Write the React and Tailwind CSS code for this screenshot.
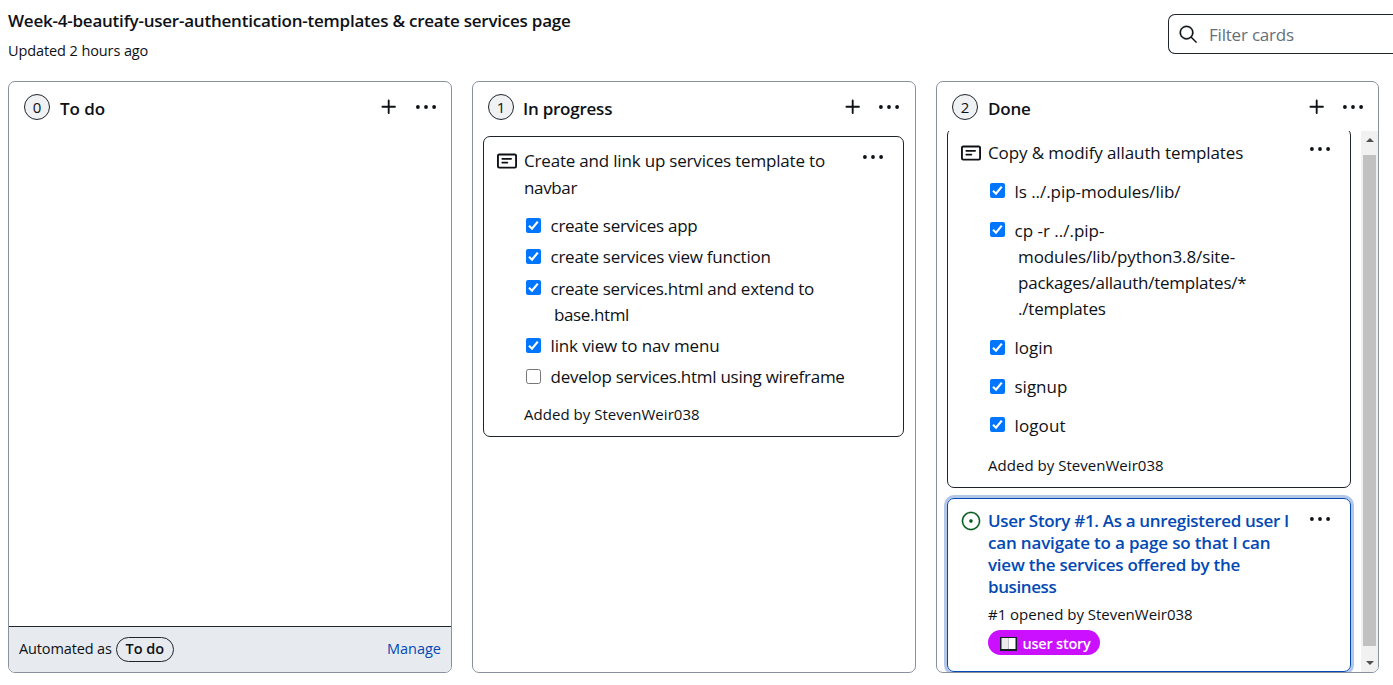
import { GoSearch, GoIssueOpened } from "react-icons/go";

function T({ c = "", children }) {
  return <span className={"inline-block whitespace-nowrap " + c}>{children}</span>;
}

function Plus() {
  return (
    <svg width="20" height="20" viewBox="0 0 16 16" fill="currentColor">
      <path d="M7.75 2a.75.75 0 0 1 .75.75V7h4.25a.75.75 0 0 1 0 1.5H8.5v4.25a.75.75 0 0 1-1.5 0V8.5H2.75a.75.75 0 0 1 0-1.5H7V2.75A.75.75 0 0 1 7.75 2Z" />
    </svg>
  );
}

function Dots() {
  return (
    <svg className="block" width="22" height="6" viewBox="0 0 22 6" fill="currentColor">
      <circle cx="1.9" cy="3" r="1.9" />
      <circle cx="10" cy="3" r="1.9" />
      <circle cx="18.1" cy="3" r="1.9" />
    </svg>
  );
}

function NoteIcon() {
  return (
    <svg className="block shrink-0" width="20" height="20" viewBox="0 0 16 16" fill="currentColor">
      <path d="M0 3.75C0 2.784.784 2 1.75 2h12.5c.966 0 1.75.784 1.75 1.75v8.5A1.75 1.75 0 0 1 14.25 14H1.75A1.75 1.75 0 0 1 0 12.25Zm1.75-.25a.25.25 0 0 0-.25.25v8.5c0 .138.112.25.25.25h12.5a.25.25 0 0 0 .25-.25v-8.5a.25.25 0 0 0-.25-.25ZM3.5 6.25a.75.75 0 0 1 .75-.75h7a.75.75 0 0 1 0 1.5h-7a.75.75 0 0 1-.75-.75Zm.75 2.25h4a.75.75 0 0 1 0 1.5h-4a.75.75 0 0 1 0-1.5Z" />
    </svg>
  );
}

function Check({ on = true }) {
  return on ? (
    <svg className="block shrink-0" width="15" height="15" viewBox="0 0 15 15">
      <rect width="15" height="15" rx="2" fill="#0075ff" />
      <path d="M3 7.8 6 10.7 11.8 3.6" fill="none" stroke="#fff" strokeWidth="2.2" />
    </svg>
  ) : (
    <span className="block size-[15px] shrink-0 rounded-[2.5px] border border-[#767676] bg-white" />
  );
}

function Item({ on = true, lines }) {
  return (
    <li className="flex">
      <span className="pt-[5px]"><Check on={on} /></span>
      <span className="ml-[9.5px] flex flex-col pt-[0.5px] -mb-[0.5px]">
        {lines.map(([t, c], i) => (
          <span key={t} className={i ? "h-[26.25px] pl-[3.5px]" : "h-[26.25px]"}><T c={c}>{t}</T></span>
        ))}
      </span>
    </li>
  );
}

function ColumnHead({ count, title, pad = "pr-[13px]", gap = "ml-4", inset = "ml-[10px]" }) {
  return (
    <header className={"flex h-[50px] shrink-0 items-center pl-[15px] " + pad}>
      <span className="flex size-[26px] items-center justify-center rounded-full border border-[#20252c] bg-[#eff1f3] pt-px text-[15px]">{count}</span>
      <h3 className={"grow pt-[3px] text-[17px] font-semibold leading-[26px] " + inset}>{title}</h3>
      <Plus />
      <span className={gap}><Dots /></span>
    </header>
  );
}

export default function App() {
  return (
    <div className="h-[685px] w-[1393px] overflow-hidden bg-white font-['Open_Sans',sans-serif] text-[17px] leading-[26.25px] text-[#0e1116]">
      <div className="flex h-[81px] justify-between">
        <div className="pl-2 pt-2">
          <h2 className="font-semibold"><T c="tracking-[-0.225px]">Week-4-beautify-user-authentication-templates &amp; create services page</T></h2>
          <p className="mt-1 text-[14.5px]"><T c="tracking-[-0.1px]">Updated 2 hours ago</T></p>
        </div>
        <div className="mt-[14px] flex h-10 w-[225px] items-center rounded-l-[7px] border border-r-0 border-[#20252c] pl-[9px]">
          <GoSearch size={20} strokeWidth=".4" />
          <span className="ml-[11px] pt-[3px] text-[#66707b]"><T c="tracking-[-0.2px]">Filter cards</T></span>
        </div>
      </div>
      <main className="flex gap-5 pl-2">
        <section className="flex h-[592px] w-[444px] flex-col overflow-hidden rounded-[7px] border border-[#88929d]">
          <ColumnHead count="0" gap="ml-[17px]" title={<T c="tracking-[-0.07px]">To do</T>} />
          <div className="grow" />
          <footer className="flex h-[46px] items-center border-t border-[#20252c] bg-[#e7ebef] px-[10px] text-[14.5px]">
            <T c="tracking-[-0.13px]">Automated as</T>
            <span className="ml-1 flex h-[25px] w-[58px] items-center justify-center rounded-full border border-[#20252c] font-semibold"><T>To do</T></span>
            <span className="ml-auto text-[#0349b4]"><T>Manage</T></span>
          </footer>
        </section>
        <section className="h-[592px] w-[444px] rounded-[7px] border border-[#88929d]">
          <ColumnHead count="1" pad="pr-[14px]" inset="ml-[9px]" title={<T c="tracking-[-0.24px]">In progress</T>} />
          <article className="ml-[10px] mt-1 flex h-[301px] w-[421px] rounded-[7px] border border-[#20252c] pl-[13px] pr-[18px]">
            <span className="pt-[14px]"><NoteIcon /></span>
            <div className="ml-[7px] grow pt-[11px]">
              <p><T c="tracking-[-0.19px]">Create and link up services template to</T></p>
              <p className="pt-[0.5px]"><T c="tracking-[-0.36px]">navbar</T></p>
              <ul className="mt-[11.5px] flex flex-col gap-[5px] pl-[2px]">
                <Item lines={[["create services app", "tracking-[-0.26px]"]]} />
                <Item lines={[["create services view function", "tracking-[-0.25px]"]]} />
                <Item lines={[["create services.html and extend to", "tracking-[-0.28px]"], ["base.html", "tracking-[-0.39px]"]]} />
                <Item lines={[["link view to nav menu", "tracking-[-0.14px]"]]} />
                <Item on={false} lines={[["develop services.html using wireframe", "tracking-[-0.27px]"]]} />
              </ul>
              <p className="mt-[11px] text-[15px]"><T c="tracking-[0.03px]">Added by StevenWeir038</T></p>
            </div>
            <span className="pt-[16.5px]"><Dots /></span>
          </article>
        </section>
        <section className="flex h-[592px] w-[443px] flex-col overflow-hidden rounded-[7px] border border-[#88929d]">
          <ColumnHead count="2" title={<T c="tracking-[-0.2px]">Done</T>} />
          <div className="-mt-px flex min-h-0 grow justify-between">
            <div className="flex h-[542px] w-[420px] flex-col overflow-hidden pl-[10px]">
              <article className="-mt-[3px] flex h-[360px] w-[404px] shrink-0 rounded-[7px] border border-[#20252c] pl-[13px] pr-[18px]">
                <span className="pt-[14px]"><NoteIcon /></span>
                <div className="ml-[7px] grow pt-[11px]">
                  <p><T c="tracking-[-0.1px]">Copy &amp; modify allauth templates</T></p>
                  <ul className="mt-[12px] flex flex-col gap-[12.6px] pl-[2px]">
                    <Item lines={[["ls ../.pip-modules/lib/", "tracking-[-0.05px]"]]} />
                    <Item lines={[["cp -r ../.pip-"], ["modules/lib/python3.8/site-", "tracking-[-0.1px]"], ["packages/allauth/templates/*", "tracking-[-0.23px]"], ["./templates", "tracking-[-0.2px]"]]} />
                    <Item lines={[["login"]]} />
                    <Item lines={[["signup"]]} />
                    <Item lines={[["logout", "tracking-[0.1px]"]]} />
                  </ul>
                  <p className="mt-[13.5px] text-[15px]"><T c="tracking-[0.03px]">Added by StevenWeir038</T></p>
                </div>
                <span className="pt-[16.5px]"><Dots /></span>
              </article>
              <article className="mt-[10px] flex h-[174px] w-[404px] shrink-0 rounded-[7px] border border-[#0349b4] pl-[13px] pr-[18px] ring-3 ring-[#0349b4]/30">
                <span className="pt-[12px] text-[#055d20]"><GoIssueOpened size={20} strokeWidth=".3" /></span>
                <div className="ml-[7px] grow pt-[11px]">
                  <p className="flex flex-col font-semibold leading-[22px] text-[#0349b4]">
                    <T c="tracking-[-0.32px]">User Story #1. As a unregistered user I</T>
                    <T c="tracking-[-0.17px]">can navigate to a page so that I can</T>
                    <T c="tracking-[-0.24px]">view the services offered by the</T>
                    <T c="tracking-[-0.4px]">business</T>
                  </p>
                  <p className="mt-[3px] text-[15px]"><T c="tracking-[-0.02px]">#1 opened by StevenWeir038</T></p>
                  <span className="mt-[3px] flex h-[25px] w-[112px] items-center rounded-full bg-[#cb0fff] pl-3 text-[14.5px] font-semibold text-white">
                    <svg className="mt-[3px] shrink-0" width="17" height="14" viewBox="0 0 17 14">
                      <path d="M0 0h17v14H0z" fill="#16202b" />
                      <path d="M1.5 1h7v11h-7z" fill="#ececec" />
                      <path d="M8.5 1h7v11h-7z" fill="#fff" />
                    </svg>
                    <span className="ml-[5.5px] pt-[2px]"><T c="tracking-[-0.22px]">user story</T></span>
                  </span>
                </div>
                <span className="pt-[16.5px]"><Dots /></span>
              </article>
            </div>
            <div className="flex w-[17px] flex-col items-center bg-[#f1f1f1]">
              <span className="flex h-6 items-start pt-[7px]"><svg width="8" height="4" viewBox="0 0 8 4"><path d="M0 4 4 0l4 4z" fill="#505050" /></svg></span>
              <span className="h-[491px] w-[13px] bg-[#c1c1c1]" />
              <span className="flex pt-[15px]"><svg width="8" height="4" viewBox="0 0 8 4"><path d="M0 0h8L4 4z" fill="#505050" /></svg></span>
            </div>
          </div>
        </section>
      </main>
    </div>
  );
}
